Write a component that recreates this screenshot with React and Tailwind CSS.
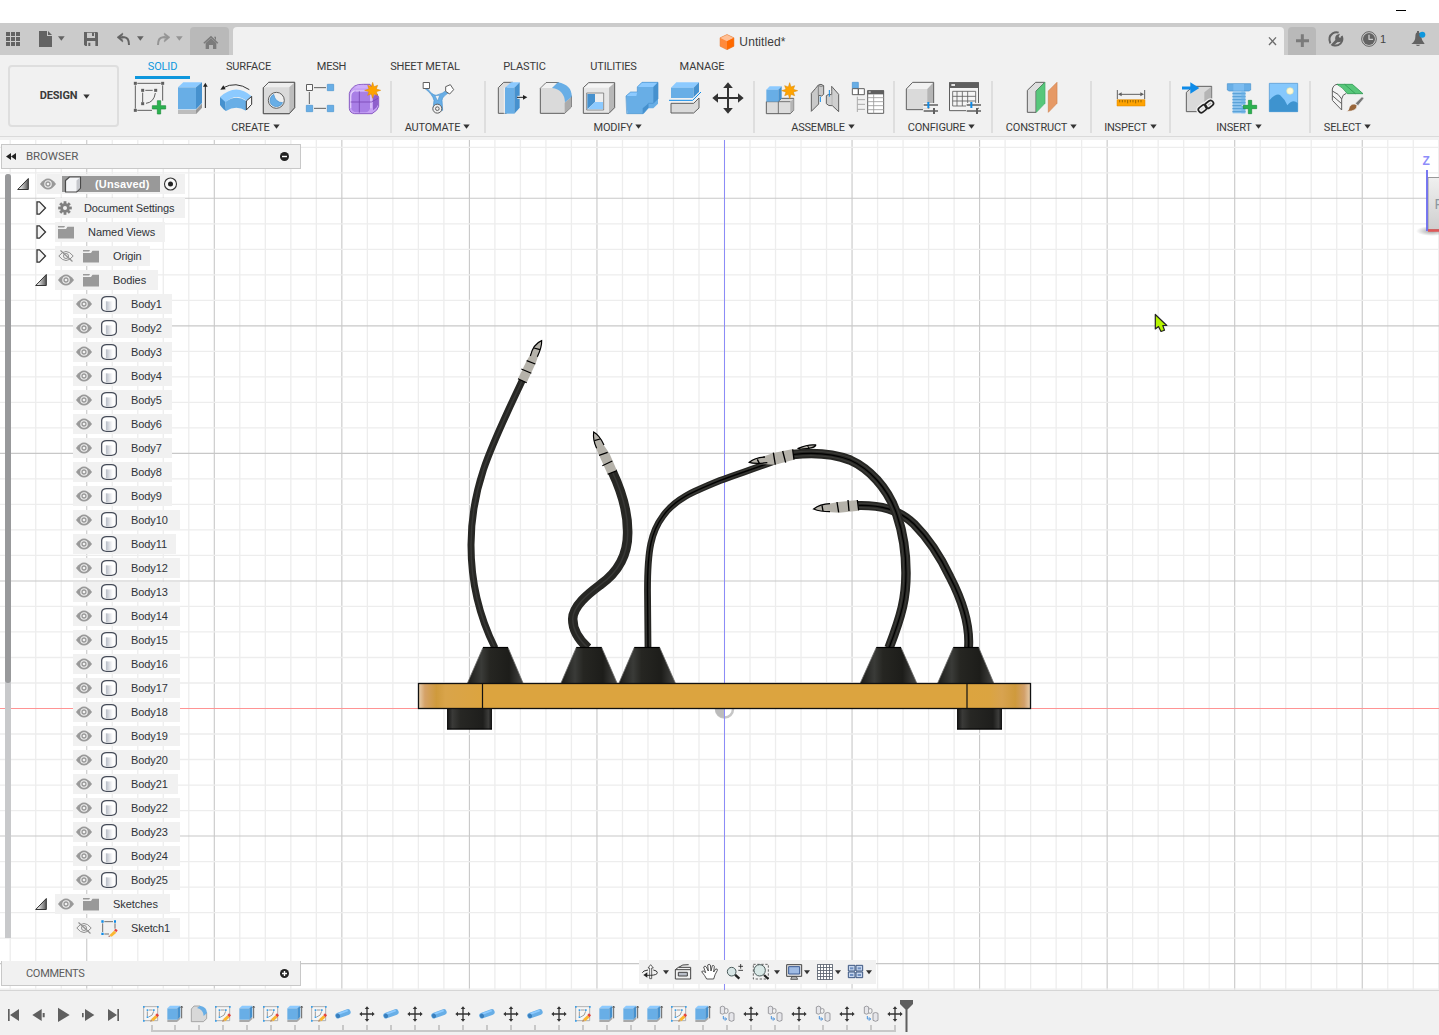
import React from "react";

// Drawings are defined on a grid three times finer than the pixel grid.
function Art({ x, y, w, h, children, className = "" }) {
  return (
    <svg
      width={w}
      height={h}
      viewBox={`${x} ${y} ${w * 3} ${h * 3}`}
      className={`block shrink-0 ${className}`}
      fill="none"
      strokeLinejoin="round"
    >
      {children}
    </svg>
  );
}

const Caret = ({ x, y, c = "#636363", s = 10 }) => (
  <path d={`M${x - s} ${y}h${2 * s}l${-s} ${s * 1.3}z`} fill={c} />
);

/* ---------- top bar ---------- */

function TopBar() {
  return (
    <div className="flex h-8 items-end bg-[#cbcbcb]">
      <Art x={0} y={69} w={30} h={32}>
        {[0, 1, 2].map((r) =>
          [0, 1, 2].map((c) => (
            <rect key={`${r}${c}`} x={18 + c * 15} y={96 + r * 15} width="12" height="12" fill="#636363" />
          ))
        )}
      </Art>
      <Art x={90} y={69} w={45} h={32}>
        <path d="M117 93h24v15h15v33h-39z" fill="#636363" />
        <path d="M144 93l12 12h-12z" fill="#636363" />
        <Caret x={184} y={109} />
      </Art>
      <Art x={225} y={69} w={35} h={32}>
        <path d="M252 96h40l2 2v40h-38l-4-4z" fill="#636363" />
        <path d="M261 98h24v16h-24zM261 123h25v15h-25z" fill="#cbcbcb" />
        <path d="M276 98h6v10h-6zM265 128h6v10h-6z" fill="#636363" />
      </Art>
      <Art x={330} y={69} w={40} h={32}>
        <path d="M366 112h7q14 1 14 23" stroke="#636363" strokeWidth="6" />
        <path d="M351 112l17-13v6l-8 7 8 8v6z" fill="#636363" stroke="#636363" strokeWidth="1.500" />
        <path d="M358 112h12" stroke="#636363" strokeWidth="6" />
        <Caret x={421} y={109} />
      </Art>
      <Art x={450} y={69} w={40} h={32}>
        <path d="M496 112h-7q-15 1-15 23" stroke="#949494" strokeWidth="6" />
        <path d="M510 112l-17-13v6l8 7-8 8v6z" fill="#949494" stroke="#949494" strokeWidth="1.500" />
        <path d="M503 112h-12" stroke="#949494" strokeWidth="6" />
        <Caret x={538} y={109} c="#949494" />
      </Art>
      <div className="h-7 w-[39px] rounded-t bg-[#b9b9b9]">
        <Art x={570} y={81} w={39} h={28}>
          <path d="M610 128l23-21 22 21-3 3-19-17-20 17z" fill="#7b7b7b" />
          <path d="M617 129l16-14 16 14v18h-10v-12h-12v12h-10zM642 110h6v12z" fill="#7b7b7b" />
        </Art>
      </div>
      <div className="ml-1 flex h-7 w-[1051px] items-center rounded-t bg-[#f1f1f1]">
        <div className="flex grow items-center justify-center pl-[4px] pt-[2px]">
          <svg width="16" height="16" viewBox="0 0 16 16" className="mr-1 block">
            <path d="M8 .5l7 3.300v8.400L8 15.700 1 12.200V3.800z" fill="#ff8a3c" />
            <path d="M8 .5l7 3.300L8 7.300 1 3.800z" fill="#ffc096" />
            <path d="M8 7.300l7-3.500v8.400L8 15.700z" fill="#ff6a00" />
            <path d="M8 .5l7 3.300v8.400L8 15.700 1 12.200V3.800z" fill="none" stroke="#e08040" strokeWidth=".5" />
          </svg>
          <span className="text-[12px] leading-4 tracking-[0.1px] text-[#3c3c3c]">Untitled*</span>
        </div>
        <Art x={565} y={81} w={11} h={28}>
          <path d="M568 112l21 23M589 112l-21 23" stroke="#6c6c6c" strokeWidth="4" />
        </Art>
        <div className="w-[5px]" />
      </div>
      <div className="ml-1 h-7 w-7 rounded-t bg-[#b9b9b9]">
        <Art x={624} y={81} w={28} h={28}>
          <path d="M667 103v38M648 122h39" stroke="#7b7b7b" strokeWidth="9" />
        </Art>
      </div>
      <Art x={708} y={69} w={40} h={32}>
        <path d="M751 130q-8-20 7-30 9-5 18-2M785 108q6 14-4 23-9 9-23 4" stroke="#636363" strokeWidth="6" />
        <path d="M752 135l14-15q-3-13 9-17l5-2-4 9 3 3 10-3q1 14-9 16l-8 1-14 12z" fill="#636363" />
      </Art>
      <Art x={828} y={69} w={22} h={32}>
        <circle cx="867" cy="117" r="22" stroke="#636363" strokeWidth="3" />
        <circle cx="867" cy="117" r="18" fill="#636363" />
        <path d="M867 104v14h12" stroke="#cbcbcb" strokeWidth="4" />
      </Art>
      <span className="ml-[2px] h-8 w-[12px] pt-[9px] text-[11px] leading-[14px] text-[#444]">1</span>
      <Art x={936} y={69} w={47} h={32}>
        <path d="M994 132q12-9 12-22 0-13 8-13t9 11 11 24zM1007 134h14q-7 8-14 0z" fill="#636363" />
        <rect x="1011" y="93" width="6" height="6" fill="#636363" />
        <circle cx="1027" cy="104" r="9" fill="#0e97dd" />
      </Art>
    </div>
  );
}

/* ---------- ribbon icons ---------- */

const B1 = "#8ccaff";
const B2 = "#68aee6";
const B3 = "#4691ce";
const G = "#5f5f5f";

const Star = ({ x, y }) => (
  <g transform={`translate(${x} ${y})`}>
    <path
      d="M0-24L4-11 15-15 11-4 24 0 11 4 15 15 4 11 0 24-4 11-15 15-11 4-24 0-11-4-15-15-4-11z"
      fill="#ffa300"
      stroke="#d98600"
      strokeWidth="1.5"
    />
  </g>
);

const Plus = ({ x, y }) => (
  <path
    d={`M${x - 5} ${y - 20}h10v15h15v10h-15v15h-10v-15h-15v-10h15z`}
    fill="#2bb24f"
    stroke="#1b8c39"
    strokeWidth="2"
  />
);

const Sliders = ({ x, y }) => (
  <g>
    <path d={`M${x - 2} ${y + 1}h46M${x - 2} ${y + 18}h46`} stroke="#f1f1f1" strokeWidth="14" />
    <path d={`M${x} ${y}h43M${x} ${y + 18}h43`} stroke={G} strokeWidth="5" />
    <path d={`M${x + 14} ${y - 9}v18`} stroke="#0e8be8" strokeWidth="6" />
    <path d={`M${x + 31} ${y + 9}v18`} stroke={G} strokeWidth="6" />
  </g>
);

const Cross4 = ({ x, y, r, c = "#333", a, sw }) => (
  <g>
    <path d={`M${x - r + a} ${y}h${2 * (r - a)}M${x} ${y - r + a}v${2 * (r - a)}`} stroke={c} strokeWidth={sw} />
    {[0, 90, 180, 270].map((d) => (
      <path key={d} d={`M${x} ${y - r}l${a * 0.85} ${a}h${-a * 1.7}z`} fill={c} transform={`rotate(${d} ${x} ${y})`} />
    ))}
  </g>
);

const createIcons = [
  <g>
    <path d="M412 250h70M406 256v70M412 331h44M488 256v46M428 278v28M436 271h22M466 279q-4 28-28 31" stroke={G} strokeWidth="3" />
    {[[406, 250], [488, 250], [406, 331], [428, 271], [467, 271], [428, 311]].map(([a, b]) => (
      <rect key={`${a}-${b}`} x={a - 4.5} y={b - 4.5} width="9" height="9" fill={G} />
    ))}
    <Plus x={477} y={322} />
  </g>,
  <g>
    <path d="M534 330h54l18-19v12l-18 19h-54z" fill="#bdbdbd" />
    <path d="M588 330l18-19v12l-18 19z" fill="#979797" />
    <path d="M534 262l16-15h56l-18 15z" fill={B1} />
    <path d="M534 262h54v66h-54z" fill={B2} />
    <path d="M588 262l18-15v62l-18 19z" fill={B3} />
    <path d="M616 324v-66" stroke="#222" strokeWidth="3" />
    <path d="M616 248l7 12h-14z" fill="#222" />
  </g>,
  <g>
    <path d="M660 291q48-44 95-2l-15 14q-32-26-65 5z" fill={B1} />
    <path d="M660 291l16 15 2 27q-6-2-18-18z" fill={B3} />
    <path d="M676 306q32-24 63-3l-1 29q-30-18-60 1z" fill={B2} />
    <path d="M739 303l16-14v24l-16 17z" fill="#f8f8f8" stroke="#333" strokeWidth="3" />
    <path d="M668 264q40-22 80 5" stroke="#333" strokeWidth="3" />
    <path d="M661 269l9-13 7 12z" fill="#222" />
  </g>,
  <g stroke={G} strokeWidth="3">
    <path d="M790 263l16-16h78v76l-16 18h-78z" fill="#dadada" />
    <path d="M791 262l15-14h77l-15 14z" fill="#eee" stroke="none" />
    <path d="M868 262l15-14v75l-15 17z" fill="#bdbdbd" stroke="none" />
    <path d="M790 263l16-16h78v76l-16 18h-78z" />
    <circle cx="829" cy="301" r="24" fill="#eee" />
    <path d="M821 283q5 25 27 25-6 12-19 12-19-2-19-19 1-13 11-18z" fill={B2} stroke={B3} strokeWidth="2" />
  </g>,
  <g>
    <path d="M942 263h36M928 276v36M942 325h36" stroke={G} strokeWidth="3" />
    <rect x="919.500" y="253.500" width="18" height="18" fill="#fafafa" stroke={G} strokeWidth="3" />
    {[[982, 253], [919, 316], [982, 316]].map(([a, b]) => (
      <rect key={`${a}-${b}`} x={a} y={b} width="19" height="19" fill={B2} stroke={B3} strokeWidth="2" />
    ))}
  </g>,
  <g>
    <path d="M1048 280q2-12 16-22 10-6 26-5h20l26 38v28q-2 12-20 22h-52q-15-2-16-16z" fill="#c6a2f4" stroke="#8a5cc4" strokeWidth="3" />
    <path d="M1068 258q10-5 24-3h18l-8 10h-38z" fill="#cfaefa" />
    <path d="M1054 282q3-8 14-9h28q12 0 14 10v42q-2 11-14 12h-26q-15-1-16-13z" fill="#a97fe6" />
    <path d="M1119 292q2-8 15-9v30q-2 10-15 18z" fill="#8f60cc" />
    <path d="M1066 273h34q12 1 13 12v40M1052 324v-34q0-14 12-18" stroke="#e2cffc" strokeWidth="3.500" />
    <path d="M1078 274v64M1052 306h62l20-11" stroke="#7847b4" strokeWidth="2.500" />
    <Star x={1118} y={271} />
  </g>,
];

const automateIcons = [
  <g>
    <path d="M140 113q16 22 28 23 20-4 38-20l8 8q-28 14-28 27l2 30-17 6-12-8 3-28q-4-18-28-36z" fill={B2} stroke={B3} strokeWidth="2" />
    <path d="M165 137l14-1-6 17z" fill="#f1f1f1" stroke={B3} strokeWidth="1.500" />
    <rect x="129.500" y="97.500" width="19" height="18" fill="#fff" stroke={G} strokeWidth="3" />
    <path d="M197 110l14-6 10 15-12 13-12-8z" fill="#fff" stroke={G} strokeWidth="3" />
    <circle cx="172" cy="176" r="13.500" fill="#eee" stroke={G} strokeWidth="3" />
    <circle cx="172" cy="176" r="5.500" stroke={G} strokeWidth="3" />
  </g>,
];

const modifyIcons = [
  <g>
    <path d="M355 113l16-16h26l-18 16v77h-24z" fill="#dcdcdc" stroke={G} strokeWidth="3" />
    <path d="M375 113l18-16h26l-16 16z" fill={B1} />
    <path d="M375 113h28v78h-28z" fill={B2} />
    <path d="M403 113l16-16v76l-16 18z" fill={B3} />
    <path d="M373 113v78" stroke="#f1f1f1" strokeWidth="3" />
    <path d="M412 142h20" stroke="#f1f1f1" strokeWidth="9" />
    <path d="M411 142h22" stroke="#222" strokeWidth="3" />
    <path d="M442 142l-13-7v14z" fill="#222" />
  </g>,
  <g>
    <path d="M481 190v-75l17-17h38l38 40v33l-20 19z" fill="#dadada" stroke={G} strokeWidth="3" />
    <path d="M483 114l16-15h32l-15 15z" fill="#f2f2f2" />
    <path d="M554 158l20-17v30l-20 19z" fill="#ababab" />
    <path d="M516 114l18-17q42 8 41 43l-20 17q-2-38-39-43z" fill={B2} />
  </g>,
  <g>
    <path d="M610 113l16-15h78v75l-17 17h-77z" fill="#e6e6e6" />
    <path d="M612 113l15-14h76l-16 14z" fill="#f5f5f5" />
    <path d="M687 113l17-15v75l-17 17z" fill="#b8b8b8" />
    <path d="M610 113l16-15h78v75l-17 17h-77z" stroke={G} strokeWidth="3" />
    <path d="M620 129h51v51h-51z" fill="#eee" stroke={G} strokeWidth="2" />
    <path d="M622 132h23v24l-23 22z" fill={B3} />
    <path d="M645 156h24v22h-46z" fill={B1} />
  </g>,
  <g>
    <path d="M738 138l14-12h20v-15l14-14h48v64l-14 14h-15v-1l-14 17h-49z" fill={B2} />
    <path d="M771 111l15-14h48l-14 14zM738 138l14-12h20l-3 12z" fill={B1} />
    <path d="M820 111l14-14v49l-14 14zM788 175l16-14v14l-16 16z" fill={B3} />
    <path d="M738 138l14-12h20v-15l14-14h48v49l-14 14h-15v14l-16 17h-49z" stroke={B3} strokeWidth="2" />
  </g>,
  <g>
    <path d="M873 160h68l16-16v30l-16 15h-68z" fill="#dadada" stroke={G} strokeWidth="3" />
    <path d="M873 113l16-16h68l-16 16z" fill={B1} />
    <path d="M873 113h68v31h-68z" fill={B2} />
    <path d="M941 113l16-16v30l-16 17z" fill={B3} />
    <path d="M867 151h71l25-25" stroke="#f1f1f1" strokeWidth="9" />
    <path d="M867 151h71l25-25" stroke="#0e8be8" strokeWidth="3" />
  </g>,
  <Cross4 x={1044} y={144} r={47} a={17} sw={6} />,
];

const assembleIcons = [
  <g>
    <path d="M79 155h36v-1l10-9h36v36l-10 10h-72z" fill="#dcdcdc" stroke={G} strokeWidth="3" />
    <path d="M151 155l10-9v35l-10 9z" fill="#b5b5b5" />
    <path d="M115 155v36M151 155h-36" stroke={G} strokeWidth="2.500" />
    <path d="M79 119l10-10h36l-10 10z" fill={B1} />
    <path d="M79 119h36v36h-36z" fill={B2} />
    <path d="M115 119l10-10v36l-10 10z" fill={B3} />
    <Star x={149} y={122} />
  </g>,
  <g stroke={G} strokeWidth="3">
    <path d="M214 130l12-14 9-11 8-2 8 4v26l-6 5-9-2v26l-22 22z" fill="#c9c9c9" />
    <path d="M235 107v29M236 107q7 5 15 0" strokeWidth="2" />
    <path d="M241 140v16" stroke="#0e8be8" />
    <path d="M275 125v-16l21 24v52l-19-18q-12 2-18-6v-24q6-6 16-3z" fill="#cfcfcf" />
    <path d="M276 112v54" stroke="#aaa" strokeWidth="2" />
    <path d="M268 120v20" stroke="#0e8be8" />
  </g>,
  <g>
    <rect x="337" y="97" width="18" height="18" fill={B2} stroke={B3} strokeWidth="2" />
    <path d="M337 116h18v18h-18zM355 116h18v18h-18z" fill="#fff" stroke={G} strokeWidth="3" />
    <path d="M352 140v46M352 149h23M352 163h23M352 178h23" stroke="#aaa" strokeWidth="3" />
    <rect x="383" y="122" width="48" height="68" fill="#fff" stroke={G} strokeWidth="3" />
    <path d="M382 121h50v12h-50z" fill={G} />
    <path d="M386 126h6" stroke="#fff" strokeWidth="3" />
    <path d="M383 143h48M383 155h48M383 167h48M383 179h48M401 133v57" stroke="#999" strokeWidth="2.500" />
  </g>,
];

const configureIcons = [
  <g>
    <path d="M499 117l19-20h63v63l-18 19h-64z" fill="#dadada" />
    <path d="M499 117l19-20h63l-18 20z" fill="#f2f2f2" />
    <path d="M562 117l19-20v63l-19 19z" fill="#b5b5b5" />
    <path d="M499 117l19-20h63v63l-18 19h-64z" stroke={G} strokeWidth="3" />
    <Sliders x={551} y={165} />
  </g>,
  <g>
    <rect x="628.500" y="98" width="87" height="84" fill="#f4f4f4" stroke={G} strokeWidth="3" />
    <path d="M627 97h90v17h-90z" fill={G} />
    <path d="M634 105h11" stroke="#fff" strokeWidth="5" />
    <path d="M638 124h69v44h-69zM638 139h69M638 153h69M651 124v44M667 124v44M683 124v44" stroke={G} strokeWidth="2.500" />
    <Sliders x={680} y={165} />
  </g>,
];

const constructIcons = [
  <g>
    <path d="M862 121l25-24h27l-26 26v64h-26z" fill="#dedede" stroke={G} strokeWidth="3" />
    <path d="M889 123l26-26v63l-26 27z" fill="#57c77a" stroke="#43ad66" strokeWidth="2" />
    <path d="M925 123l26-26v63l-26 27z" fill="#e69965" stroke="#d0824e" strokeWidth="2" />
  </g>,
];

const inspectIcons = [
  <g>
    <path d="M112 270v27M194 270v27M120 283h66" stroke={G} strokeWidth="3" />
    <path d="M114 283l11-6v12zM192 283l-11-6v12z" fill={G} />
    <rect x="111" y="299" width="84" height="19" fill="#ffa300" stroke="#d98600" strokeWidth="1.500" />
    <path d="M119 300v7M127 300v7M135 300v7M143 300v10M151 300v7M159 300v7M167 300v10M175 300v7M183 300v7" stroke="#6b4a00" strokeWidth="2" />
  </g>,
];

const insertIcons = [
  <g>
    <path d="M319 277l20-18h56v56l-18 20h-58z" fill="#dadada" stroke={G} strokeWidth="3" />
    <path d="M373 277l21-17v56l-21 18z" fill="#b5b5b5" />
    <path d="M306 264h30" stroke="#0e8be8" strokeWidth="9" />
    <path d="M331 247l27 17-27 17z" fill="#0e8be8" />
    <g stroke="#f1f1f1" strokeWidth="13">
      <rect x="354" y="318" width="27" height="17" rx="8" transform="rotate(-38 367 326)" />
      <rect x="374" y="305" width="27" height="17" rx="8" transform="rotate(-38 387 313)" />
    </g>
    <g stroke="#222" strokeWidth="5">
      <rect x="354" y="318" width="27" height="17" rx="8" transform="rotate(-38 367 326)" />
      <rect x="374" y="305" width="27" height="17" rx="8" transform="rotate(-38 387 313)" />
    </g>
  </g>,
  <g>
    <path d="M442 251h70v19l-5 3h-60l-5-3z" fill={B2} stroke={B3} strokeWidth="2" />
    <path d="M460 252h32v20h-32z" fill="#7cbcf0" />
    <path d="M458 274h38v66h-38z" fill="#8fc5ee" />
    {[0, 1, 2, 3, 4, 5, 6].map((i) => (
      <path key={i} d={`M457 ${281 + i * 9}h40`} stroke={B3} strokeWidth="2.500" />
    ))}
    <path d="M484 274h12v66h-12z" fill={B2} opacity=".55" />
    <path d="M485 316h20v-20M505 341v6" stroke="#f1f1f1" strokeWidth="3" />
    <Plus x={510} y={321} />
  </g>,
  <g>
    <rect x="568" y="250" width="85" height="85" fill="#86c8fc" stroke={B3} strokeWidth="2" />
    <path d="M568 301q20-22 32-16 14 12 22 31 16-20 31-7v26h-85z" fill="#3e93cf" />
    <circle cx="630" cy="273" r="10" fill="#fff9d6" stroke="#dde3b0" strokeWidth="2" />
  </g>,
];

const selectIcons = [
  <g>
    <path d="M757 267q4-14 18-15l29 28-19 12v38l-28-29z" fill="#f4f4f4" />
    <path d="M757 300v-33q4-14 16-14M757 273q20 8 28 24v33l-28-29M757 287l28 24M785 297q2-14 14-17" stroke={G} strokeWidth="3" />
    <path d="M771 253h46l32 28h-47q-14-20-31-28z" fill="#57c77a" stroke="#2f9a53" strokeWidth="2.500" />
    <path d="M794 253l32 28" stroke="#2f9a53" strokeWidth="2.500" />
    <path d="M826 310l20-20 6 5-18 22z" fill="#777" stroke="#f1f1f1" strokeWidth="2" />
    <path d="M799 334q8-2 9-13 8-14 23-6 1 20-32 19z" fill="#99663a" stroke="#f1f1f1" strokeWidth="2" />
  </g>,
];

const groups = [
  { name: "CREATE", icons: createIcons, x: 387, y: 243, cls: "w-[266px]", pad: "pl-[3px]", label: "pr-[5px]" },
  { name: "AUTOMATE", icons: automateIcons, x: 108, y: 93, cls: "w-[94px]", pad: "pl-[24px]", label: "pr-px" },
  { name: "MODIFY", icons: modifyIcons, x: 330, y: 93, cls: "w-[269px]", pad: "pl-[4px]", label: "pr-[3px]" },
  { name: "ASSEMBLE", icons: assembleIcons, x: 60, y: 93, cls: "w-[140px]", pad: "pl-[5px]", label: "pr-[2px]" },
  { name: "CONFIGURE", icons: configureIcons, x: 480, y: 93, cls: "w-[98px]", pad: "pl-[5px]", label: "pr-[3px]" },
  { name: "CONSTRUCT", icons: constructIcons, x: 840, y: 93, cls: "w-[99px]", pad: "pl-[27px]", label: "" },
  { name: "INSPECT", icons: inspectIcons, x: 87, y: 243, cls: "w-[79px]", pad: "pl-[17px]", label: "" },
  { name: "INSERT", icons: insertIcons, x: 288, y: 243, cls: "w-[140px]", pad: "pl-[5px]", label: "pr-[2px]" },
  { name: "SELECT", icons: selectIcons, x: 735, y: 243, cls: "w-[73px]", pad: "pl-[14px]", label: "", last: true },
];

const tabs = [
  ["SOLID", "w-[55px]", true],
  ["SURFACE", "w-[117px]"],
  ["MESH", "w-[49px]"],
  ["SHEET METAL", "w-[138px]"],
  ["PLASTIC", "w-[61px]"],
  ["UTILITIES", "w-[117px]"],
  ["MANAGE", "w-[60px]"],
];

function Ribbon() {
  return (
    <div className="flex h-[82px] border-b border-[#dadada] bg-[#f1f1f1] font-['Roboto',sans-serif] text-[11px] text-[#3a3a3a]">
      <div className="ml-2 mt-[10px] flex h-[62px] w-[111px] items-center justify-center rounded border-2 border-[#dedede] pl-[3px] pt-px font-bold tracking-[-0.15px]">
        DESIGN
        <svg width="7" height="5" viewBox="0 0 7 5" className="mb-px ml-1.5">
          <path d="M.3.5h6.400L3.500 4.700z" fill="#333" />
        </svg>
      </div>
      <div className="ml-[7px]">
        <div className="flex h-[26px] pl-[9px]">
          {tabs.map(([t, w, on]) => (
            <div
              key={t}
              className={`${w} flex h-[24px] justify-center whitespace-nowrap pt-[4px] leading-4 tracking-[-0.15px] ${
                on ? "border-b-[3px] border-[#0e97dd] text-[#0e97dd]" : ""
              }`}
            >
              {t}
            </div>
          ))}
        </div>
        <div className="flex">
          {groups.map((g) => (
            <div key={g.name} className={`${g.cls} h-[52px] shrink-0 ${g.last ? "" : "border-r-2 border-[#dedede]"}`}>
              <div className={`flex h-[34px] ${g.pad}`}>
                {g.icons.map((ic, i) => (
                  <Art key={i} x={g.x + 129 * i} y={g.y} w={43} h={34}>
                    {ic}
                  </Art>
                ))}
              </div>
              <div className={`mt-[4px] flex items-center justify-center leading-[18px] tracking-[-0.2px] ${g.label}`}>
                {g.name}
                <svg width="7" height="5" viewBox="0 0 7 5" className="mb-[3px] ml-[3px]">
                  <path d="M.3.5h6.400L3.500 4.700z" fill="#333" />
                </svg>
              </div>
            </div>
          ))}
        </div>
      </div>
    </div>
  );
}

/* ---------- viewport drawing ---------- */

const minorV = Array.from({ length: 57 }, (_, i) => i - 28);
const minorH = Array.from({ length: 34 }, (_, i) => i - 22);

function Cone({ l, r, bl, br }) {
  return (
    <g>
      <path d={`M${l} 647.500H${r}L${br} 683H${bl}z`} fill="url(#cone)" />
      <path d={`M${l} 647.500L${bl} 683M${r} 647.500L${br} 683`} stroke="#6a6a68" strokeWidth=".8" />
      <path d={`M${l} 647.500H${r}`} stroke="#000" strokeWidth="1.200" />
    </g>
  );
}

function Cable({ d, w, seam }) {
  return (
    <g fill="none">
      <path d={d} stroke="#272724" strokeWidth={w} />
      {seam ? (
        <>
          <path d={d} stroke="#3a3a37" strokeWidth={w * 0.6} />
          <path d={d} stroke="#262623" strokeWidth={w * 0.35} />
          <path d={d} stroke="#000" strokeWidth="1.200" />
        </>
      ) : (
        <path d={d} stroke="#383836" strokeWidth="1.500" />
      )}
    </g>
  );
}

const TIP = "#b5b2aa";

function Scene() {
  return (
    <svg width="1439" height="850" viewBox="0 140 1439 850" className="absolute inset-0 block">
      <defs>
        <linearGradient id="cone">
          <stop offset="0" stopColor="#1c1c1a" />
          <stop offset=".25" stopColor="#3a3b38" />
          <stop offset=".4" stopColor="#262622" />
          <stop offset=".75" stopColor="#1d1d1a" />
          <stop offset="1" stopColor="#454543" />
        </linearGradient>
        <linearGradient id="foot">
          <stop offset="0" stopColor="#111" />
          <stop offset=".12" stopColor="#3a3a38" />
          <stop offset=".3" stopColor="#272724" />
          <stop offset=".8" stopColor="#1e1e1c" />
          <stop offset=".92" stopColor="#3c3c3a" />
          <stop offset="1" stopColor="#111" />
        </linearGradient>
        <linearGradient id="endL">
          <stop offset="0" stopColor="#e8cfae" />
          <stop offset=".1" stopColor="#d5a268" />
          <stop offset=".28" stopColor="#cf9a3c" />
          <stop offset=".42" stopColor="#d9a44a" />
          <stop offset="1" stopColor="#dca43f" />
        </linearGradient>
        <linearGradient id="endR">
          <stop offset="0" stopColor="#dca43f" />
          <stop offset=".35" stopColor="#dba440" />
          <stop offset=".55" stopColor="#d8a350" />
          <stop offset=".76" stopColor="#cf9a3c" />
          <stop offset=".9" stopColor="#d2a06a" />
          <stop offset="1" stopColor="#e8cfae" />
        </linearGradient>
        <linearGradient id="face" x2="0" y2="1">
          <stop offset="0" stopColor="#f0f0f0" />
          <stop offset="1" stopColor="#cfcfcf" />
        </linearGradient>
        <radialGradient id="shade">
          <stop offset="0" stopColor="#777" stopOpacity=".7" />
          <stop offset="1" stopColor="#777" stopOpacity="0" />
        </radialGradient>
      </defs>
      <rect x="0" y="140" width="1439" height="850" fill="#fff" />
      {minorV.map((i) => (
        <path key={i} d={`M${724.500 + i * 25.510} 140v850`} stroke={i % 5 ? "#ededed" : "#c8c8c8"} strokeWidth={i % 5 ? 1.300 : 1.100} />
      ))}
      {minorH.map((i) => (
        <path key={i} d={`M0 ${708.500 + i * 25.510}h1439`} stroke={i % 5 ? "#ededed" : "#c8c8c8"} strokeWidth={i % 5 ? 1.300 : 1.100} />
      ))}
      <path d="M0 708.500h1439" stroke="#ff9494" />
      <path d="M724.500 140v850" stroke="#8c8cf7" />
      <circle cx="724.500" cy="709" r="8.500" fill="#fff" fillOpacity=".7" stroke="#c6c6c6" strokeWidth="2.500" />
      <path d="M724.500 699v19a9.500 9.500 0 010-19" fill="#bbb" />
      <path d="M724.500 709v281" stroke="#8c8cf7" />

      <g transform="translate(720 420) scale(.33333)">
        <path d="M235 85q30-13 52-10 1 9-47 13z" fill={TIP} stroke="#000" strokeWidth="4" />
        <path d="M262 76l6 10" stroke="#000" strokeWidth="3" />
      </g>
      <Cable d="M495 648C478 614 471 580 471 545C471 485 492 445 522.500 380" w={7} />
      <Cable d="M588 648C578 639 572.700 630 572.700 619C573 606 588 594 600 585C617 573 627.700 556 627.700 533C628 510 621 490 612 471" w={9.500} />
      <Cable d="M648 648L647.500 590C647.500 550 651 532 663 516C675 499 692 492 720 480.500C740 473 760 467 785 457" w={6.800} seam />
      <Cable d="M968.500 648C970 628 964 604 950 577C940 556 928 538 914 524C898 509 880 505 858 505.500" w={9} seam />
      <Cable d="M889 648C902 614 906 598 906 573C906 548 902 530 897 515C888 487 868 468 850 460C832 453 815 452 793 454.500" w={9.500} seam />

      <g transform="translate(400 320) scale(.33333)" fill="none" stroke="#000" strokeWidth="3.500">
        <path d="M354 176l26 12 27-58 14-40 4-28-10 6-23 34-12 20z" fill={TIP} stroke="none" />
        <path d="M391 108q9-36 34-46 1 18-13 48" fill={TIP} />
        <path d="M402 84l18 5M380 122l26 10M364 147l30 13M354 176l26 12" />
        <path d="M623 463l28-11-23-52-17-25-31-39 2 26 6 23 9 20z" fill={TIP} stroke="none" />
        <path d="M590 385q-12-25-9-49 17 9 31 39" fill={TIP} />
        <path d="M583 362l17-5M597 406l26-9M607 437l30-14M623 463l28-11" />
      </g>
      <g transform="translate(720 420) scale(.33333)" fill="none" stroke="#000" strokeWidth="4">
        <path d="M88 126l17-8 55-19 59-12 3 32-57 15-30-1-40-2z" fill={TIP} stroke="none" />
        <path d="M135 111q-30 1-47 16 17 6 54 1" fill={TIP} />
        <path d="M112 118l6 12M160 98l6 36M188 93l9 35M218 88l4 31" />
        <path d="M281 267l29-13 45-8 58-6 3 32-58 6-48-3z" fill={TIP} stroke="none" />
        <path d="M330 251q-30 1-49 16 19 8 49 8" fill={TIP} />
        <path d="M306 256l3 17M351 246l5 31M384 240l3 33M412 240l4 31" />
      </g>

      <Cone l={483} r={508} bl={467.500} br={523} />
      <Cone l={576.300} r={601.700} bl={561} br={617} />
      <Cone l={634.300} r={659.700} bl={619} br={675.300} />
      <Cone l={876.300} r={901} bl={860.300} br={916.700} />
      <Cone l={953.300} r={978.700} bl={937.700} br={993.700} />

      <rect x="447" y="708" width="45" height="21.500" fill="url(#foot)" />
      <rect x="957" y="708" width="45" height="21.500" fill="url(#foot)" />
      <path d="M447 729h45M957 729h45" stroke="#000" />
      <rect x="418.500" y="683.500" width="612" height="25" fill="#dca43f" />
      <rect x="418.500" y="683.500" width="64" height="25" fill="url(#endL)" />
      <rect x="967" y="683.500" width="63.500" height="25" fill="url(#endR)" />
      <rect x="418.500" y="683.500" width="612" height="25" fill="none" stroke="#111" strokeWidth="1.300" />
      <path d="M482.500 683v25M967 683v25" stroke="#111" strokeWidth="1.200" />

      <ellipse cx="1432" cy="231" rx="16" ry="5" fill="url(#shade)" />
      <rect x="1428" y="177.500" width="20" height="52" fill="url(#face)" stroke="#999" strokeWidth="1" />
      <path d="M1428 230.500h20" stroke="#e05555" strokeWidth="2.500" />
      <path d="M1427 170v61" stroke="#6a6af0" strokeWidth="1.800" />
      <text x="1422.500" y="165" fontSize="12" fontWeight="700" fill="#8d8dfa" fontFamily="Liberation Sans, sans-serif">
        Z
      </text>
      <text x="1434.500" y="209" fontSize="14" fill="#8d979f" fontFamily="Liberation Sans, sans-serif">
        F
      </text>
      <path d="M1155.300 314.500v14.500l3.200-2.500 2.500 5 3.500-1.200-1.700-4.800h4z" fill="#b6f500" stroke="#222" strokeWidth="1.200" strokeLinejoin="round" />
    </svg>
  );
}

/* ---------- browser tree ---------- */

const Eye = () => (
  <svg width="16" height="12" viewBox="0 0 16 12" className="shrink-0">
    <path d="M0 6q8-11 16 0-8 11-16 0z" fill="#999" />
    <circle cx="8" cy="6" r="3.200" fill="none" stroke="#f1f1f1" strokeWidth="1.100" />
    <circle cx="8" cy="6" r="1.300" fill="#f1f1f1" />
  </svg>
);

const EyeOff = () => (
  <svg width="16" height="12" viewBox="0 0 16 12" className="shrink-0" fill="none" stroke="#909090">
    <path d="M.8 6q7.200-9 14.400 0-7.200 9-14.400 0z" />
    <circle cx="8" cy="6" r="2.500" />
    <path d="M2.500.5l12 11" strokeWidth="1.200" />
  </svg>
);

const Folder = () => (
  <svg width="16" height="14" viewBox="0 0 16 14" className="shrink-0" fill="#999">
    <path d="M0 13.500V4h8l1.500-2.200H16v11.700zM0 1h7l-.8 1.600H0z" />
  </svg>
);

const Gear = () => (
  <svg width="14" height="14" viewBox="-7 -7 14 14" className="shrink-0">
    {[0, 45, 90, 135].map((a) => (
      <rect key={a} x="-1.400" y="-6.800" width="2.800" height="13.600" fill="#808080" transform={`rotate(${a})`} />
    ))}
    <circle r="4.700" fill="#808080" />
    <circle r="2" fill="#f1f1f1" />
  </svg>
);

const BodyIcon = () => (
  <svg width="16" height="16" viewBox="0 0 16 16" className="shrink-0">
    <defs>
      <linearGradient id="cyl" x1="0" x2="1">
        <stop offset="0" stopColor="#fff" />
        <stop offset=".22" stopColor="#f4f5f7" />
        <stop offset=".3" stopColor="#bcc1ca" />
        <stop offset=".55" stopColor="#e0e2e7" />
        <stop offset=".8" stopColor="#fdfdfd" />
      </linearGradient>
    </defs>
    <path d="M.7 3.800Q1.500.7 5.500.7h5q4 0 4.800 3.100v8.400q-.8 3.100-4.800 3.100h-5q-4 0-4.800-3.100z" fill="#fff" stroke="#454b58" strokeWidth="1.300" />
    <path d="M1.800 4.800q6.200 1.400 12.400 0v7.400q-1 2.100-3.500 2.100H5.300q-2.500 0-3.500-2.100z" fill="url(#cyl)" />
  </svg>
);

const SketchIcon = () => (
  <svg width="17" height="17" viewBox="0 0 51 51" className="shrink-0" fill="none">
    <path d="M10 5h26M5 10v26M10 42h14M42 10v16" stroke="#555" strokeWidth="2.500" />
    <path d="M1 1h7v7H1zM39 1h6v7h-6zM1 38h7v7H1z" fill="#0e8be8" />
    <path d="M25 46l14-14 7 6-14 12z" fill="#fbb731" />
    <path d="M24 46l-2 5 7-1z" fill="#a77" />
    <path d="M39 31l5-5 6 5-4 6z" fill="#e4433c" />
  </svg>
);

const Closed = () => (
  <svg width="18" height="14" viewBox="0 0 18 14" className="shrink-0">
    <path d="M2 .8h2.500l6 6.200-6 6.200H2z" fill="#f4f4f4" stroke="#333" strokeWidth="1.300" />
  </svg>
);

const Open = () => (
  <svg width="18" height="14" viewBox="0 0 18 14" className="shrink-0">
    <defs>
      <linearGradient id="tri">
        <stop offset=".3" stopColor="#ddd" />
        <stop offset="1" stopColor="#555" />
      </linearGradient>
    </defs>
    <path d="M.7 12.500L11.300 1.500v11z" fill="url(#tri)" stroke="#333" strokeWidth="1" />
  </svg>
);

function Row({ indent, arrow, box, children }) {
  return (
    <div className={`mb-1 flex h-5 items-center ${indent}`}>
      {arrow}
      <div className={`flex h-5 items-center bg-[#f1f1f1] pl-[3px] ${box}`}>{children}</div>
    </div>
  );
}

const bodies = Array.from({ length: 25 }, (_, i) => i + 1);

function Tree() {
  return (
    <div className="mt-[5px] flex">
      <div className="ml-[5px] h-[764px] w-[6px] rounded-t-full bg-[#c8c9cb]">
        <div className="h-[509px] rounded-full bg-[#98999b]" />
      </div>
      <div className="text-[11px] leading-4 text-[#2f3338]">
        <Row indent="pl-[6px]" arrow={<span className="mr-[2px]"><Open /></span>} box="w-[148px]">
          <Eye />
          <div className="ml-[6px] flex h-4 w-[98px] items-center bg-[#999] pl-[2px] font-bold tracking-[0.15px] text-white">
            <svg width="18" height="17" viewBox="0 0 18 17" className="shrink-0">
              <path d="M1.500 4.500l4-3.500h11v11l-4 4h-11z" fill="#f4f5f7" stroke="#4a4a4a" strokeWidth="1.200" strokeLinejoin="round" />
              <path d="M12.500 4.500l3.500-3v10.500l-3.500 3.500z" fill="#c5c7cc" />
            </svg>
            <span className="ml-[13px]">(Unsaved)</span>
          </div>
          <svg width="15" height="14" viewBox="0 0 15 14" className="ml-[3px]">
            <circle cx="7.500" cy="7" r="6" fill="#f8f8f8" stroke="#333" strokeWidth="1.100" />
            <circle cx="7.500" cy="7" r="2.500" fill="#222" />
          </svg>
        </Row>
        <Row indent="pl-[24px]" arrow={<span className="mr-[2px]"><Closed /></span>} box="w-[130px]">
          <Gear />
          <span className="ml-[12px] tracking-[-0.16px]">Document Settings</span>
        </Row>
        <Row indent="pl-[24px]" arrow={<span className="mr-[2px]"><Closed /></span>} box="w-[110px]">
          <Folder />
          <span className="ml-[14px] tracking-[-0.05px]">Named Views</span>
        </Row>
        <Row indent="pl-[24px]" arrow={<span className="mr-[2px]"><Closed /></span>} box="w-[95px]">
          <EyeOff />
          <span className="ml-[9px]"><Folder /></span>
          <span className="ml-[14px] tracking-[-0.15px]">Origin</span>
        </Row>
        <Row indent="pl-[24px]" arrow={<span className="mr-[2px]"><Open /></span>} box="w-[103px]">
          <Eye />
          <span className="ml-[9px]"><Folder /></span>
          <span className="ml-[14px] tracking-[-0.1px]">Bodies</span>
        </Row>
        {bodies.map((n) => (
          <Row key={n} indent="pl-[62px]" box={n < 10 ? "w-[99px]" : n === 11 ? "w-[103px]" : n === 21 ? "w-[105px]" : "w-[107px]"}>
            <Eye />
            <span className="ml-[9px]"><BodyIcon /></span>
            <span className="ml-[14px] tracking-[-0.1px]">Body{n}</span>
          </Row>
        ))}
        <Row indent="pl-[24px]" arrow={<span className="mr-[2px]"><Open /></span>} box="w-[115px]">
          <Eye />
          <span className="ml-[9px]"><Folder /></span>
          <span className="ml-[14px] tracking-[-0.05px]">Sketches</span>
        </Row>
        <Row indent="pl-[62px]" box="w-[107px]">
          <EyeOff />
          <span className="ml-[9px]"><SketchIcon /></span>
          <span className="ml-[13px] tracking-[-0.1px]">Sketch1</span>
        </Row>
      </div>
    </div>
  );
}

/* ---------- navigation bar ---------- */

function NavBar() {
  return (
    <Art x={57} y={30} w={237} h={24} className="bg-[#f1f1f1]">
      <path d="M89 86V54h-5l8-10 8 10h-5v32z" fill="#fff" stroke="#444" strokeWidth="2.500" />
      <path d="M100 60q12 2 12 8 0 7-20 8H78M84 60q-15 2-17 8" stroke="#333" strokeWidth="3" />
      <path d="M70 75l12-8v16z" fill="#222" />
      <Caret x={138} y={61} c="#333" s={9} />
      <path d="M166 59h46v28h-46zM166 59l9-7h37v7M176 52q10-10 30-8" stroke="#444" strokeWidth="3" />
      <rect x="175" y="67" width="27" height="11" fill="#b9bec8" stroke="#444" strokeWidth="3" />
      <path
        d="M260 87q-5-10-15-22 3-6 12 3l-6-17q4-6 8 0l6 12-2-18q5-4 8 0l2 18 4-16q5-2 6 2l-2 17 6-9q6-2 5 4-8 13-11 26z"
        fill="#fff"
        stroke="#333"
        strokeWidth="2.500"
      />
      <path d="M345 74l13 12" stroke="#222" strokeWidth="7" />
      <circle cx="335" cy="65" r="13" fill="#d8e6e6" stroke="#4a5a5a" strokeWidth="3" />
      <path d="M355 49h14M362 42v14M355 61h14" stroke="#222" strokeWidth="2.500" />
      <path d="M400 43h45v44h-45z" stroke="#444" strokeWidth="2.500" strokeDasharray="7 5" />
      <path d="M432 75l13 12" stroke="#222" strokeWidth="7" />
      <circle cx="419" cy="61" r="17" fill="#d8e8e6" stroke="#4a5a5a" strokeWidth="3" />
      <Caret x={471} y={61} c="#333" s={9} />
      <rect x="500" y="44" width="45" height="35" fill="#e6e6e6" stroke="#444" strokeWidth="3" />
      <rect x="506" y="50" width="33" height="22" fill="#9fbbe4" stroke="#3a5a94" strokeWidth="3" />
      <path d="M516 80h13l4 8h-21z" fill="#bbb" stroke="#444" strokeWidth="2.500" />
      <Caret x={561} y={61} c="#333" s={9} />
      <rect x="592" y="43" width="45" height="45" fill="#fff" />
      {[0, 1, 2, 3, 4, 5].map((i) => (
        <path key={i} d={`M${592.500 + i * 9} 43v46M592 ${43.500 + i * 9}h46`} stroke="#5c6470" strokeWidth="2.600" />
      ))}
      <Caret x={654} y={61} c="#333" s={9} />
      {[[685, 46], [708, 46], [685, 66], [708, 66]].map(([a, b]) => (
        <g key={`${a}-${b}`}>
          <rect x={a} y={b} width="20" height="17" fill="#c6d6ee" stroke="#3c5680" strokeWidth="3" />
          <path d={`M${a + 5} ${b + 9}h10`} stroke="#6f8fc0" strokeWidth="6" />
        </g>
      ))}
      <Caret x={747} y={61} c="#333" s={9} />
    </Art>
  );
}

/* ---------- timeline ---------- */

const featureArt = {
  s: (
    <g>
      <path d="M431 410h42v42h-42z" fill="#f6f6f6" stroke="#a2a2a2" strokeWidth="2.500" />
      <path d="M442 424v14M447 420h11M461 424q-2 14-15 17" stroke="#8a8a8a" strokeWidth="2.500" />
      <path d="M429 408h5v5h-5zM471 408h5v5h-5zM429 450h5v5h-5zM440 418h5v5h-5zM459 418h5v5h-5zM440 439h5v5h-5z" fill="#3b9fe8" />
      <path d="M453 448l13-12 7 6-13 12z" fill="#fbb731" />
      <path d="M453 448l-3 7 8-1z" fill="#b98a5a" />
      <path d="M466 435l5-5 6 6-5 6z" fill="#e4433c" />
    </g>
  ),
  e: (
    <g>
      <path d="M430 449h29l10-9v7l-10 9h-29z" fill="#a9a9a9" />
      <path d="M430 415l8-8h31l-9 8z" fill={B1} />
      <path d="M430 415h30v34h-30z" fill={B2} />
      <path d="M460 415l9-8v33l-9 9z" fill={B3} />
      <path d="M473 445v-35M470 413l3-5 3 5" stroke="#444" strokeWidth="2.500" />
    </g>
  ),
  f: (
    <g>
      <path d="M430 455v-38l8-9h18l20 20v18l-10 9z" fill="#d8d8d8" stroke="#999" strokeWidth="2.500" />
      <path d="M447 414l9-7q21 4 21 22l-10 9q-1-20-20-24z" fill={B2} />
    </g>
  ),
  p: (
    <g transform="rotate(-20 453 432)">
      <rect x="429" y="423" width="48" height="17" rx="8" fill={B2} />
      <path d="M438 427h32" stroke={B1} strokeWidth="5" />
      <ellipse cx="437" cy="432" rx="6" ry="7" fill="#3a7fbd" />
    </g>
  ),
  m: <Cross4 x={453} y={432} r={23} a={8} sw={4} />,
  c: (
    <g>
      <path
        d="M433 411q6-5 13 0v19q-7 5-13 0zM459 430q8-5 15 0v21q-7 6-15 0z"
        fill="#e6e6ea"
        stroke="#8c8c90"
        strokeWidth="2.500"
      />
      <path d="M447 417q5-3 9 1v9q-4 5-9 2" fill="#f1f1f1" stroke="#8c8c90" strokeWidth="2.500" />
      <path d="M442 438v9h9M447 442l5 5-5 5" stroke="#4a92dc" strokeWidth="3" />
    </g>
  ),
};

const features = "sefsesespmpmpmpmpmseeesecmcmcmcm".split("");

function Timeline() {
  return (
    <div className="flex h-[45px] border-t border-[#d6d6d6] bg-[#f1f1f1]">
      <Art x={0} y={363} w={139} h={44}>
        <g fill="#5f5f5f">
          <path d="M24 417h5v36h-5zM57 417v36l-27-18z" />
          <path d="M97 435l28-18v36zM128 429h6v13h-6z" />
          <path d="M174 413l35 22-35 21z" />
          <path d="M246 429h5v13h-5zM255 417l28 18-28 18z" />
          <path d="M324 417l27 18-27 18zM352 417h5v36h-5z" />
        </g>
      </Art>
      <div>
        <div className="flex pt-[13px]">
          {features.map((f, i) => (
            <Art key={i} x={417} y={402} w={24} h={20}>
              {featureArt[f]}
            </Art>
          ))}
        </div>
        <svg width="768" height="8" viewBox="0 0 768 8" className="block" stroke="#c8c8c8" strokeWidth="2" fill="none">
          <path d="M13 1v6H757" />
          {features.slice(1).map((f, i) => (
            <path key={i} d={`M${36 + i * 24} 1v6`} />
          ))}
        </svg>
      </div>
      <svg width="16" height="34" viewBox="0 0 16 34" className="-ml-[8px] mt-[9px] block" fill="#5f5f5f">
        <path d="M1 0h13v4L8.500 9.500V32h-2V9.500L1 4z" />
      </svg>
    </div>
  );
}

export default function App() {
  return (
    <div className="flex h-[1035px] w-[1439px] flex-col overflow-hidden bg-white font-['Liberation_Sans',Arial,sans-serif]">
      <div className="flex h-[23px] justify-end pr-[33px] pt-[10px]">
        <div className="h-px w-[10px] bg-black" />
      </div>
      <TopBar />
      <Ribbon />
      <div className="h-[3px] bg-[#f1f1f1]" />
      <div className="relative h-[850px] overflow-hidden">
        <Scene />
        <div className="relative flex h-full flex-col">
          <div className="ml-px mt-1 flex h-[25px] w-[300px] shrink-0 items-center border border-[#c8c8c8] bg-[#f1f1f1] font-['Roboto',sans-serif] text-[11.5px] text-[#5c5c5c]">
            <svg width="11" height="7" viewBox="0 0 11 7" className="ml-[4px]">
              <path d="M5 0v7L0 3.500zM10 0v7L5 3.500z" fill="#222" />
            </svg>
            <span className="ml-[9px] grow tracking-[-0.1px]">BROWSER</span>
            <svg width="9" height="9" viewBox="0 0 9 9" className="mr-[11px]">
              <circle cx="4.500" cy="4.500" r="4.500" fill="#222" />
              <path d="M2 4.500h5" stroke="#fff" strokeWidth="1.400" />
            </svg>
          </div>
          <Tree />
          <div className="mt-auto flex h-[30px] shrink-0 items-start">
            <div className="ml-px mt-[1px] flex h-[25px] w-[300px] items-center border border-t-0 border-[#c8c8c8] bg-[#f1f1f1] font-['Roboto',sans-serif] text-[11px] text-[#5c5c5c]">
              <span className="ml-[24px] grow pt-[2px] tracking-[-0.3px]">COMMENTS</span>
              <svg width="9" height="9" viewBox="0 0 9 9" className="mr-[11px]">
                <circle cx="4.500" cy="4.500" r="4.500" fill="#222" />
                <path d="M2 4.500h5M4.500 2v5" stroke="#fff" strokeWidth="1.400" />
              </svg>
            </div>
            <div className="ml-[338px]">
              <NavBar />
            </div>
          </div>
        </div>
      </div>
      <Timeline />
    </div>
  );
}
